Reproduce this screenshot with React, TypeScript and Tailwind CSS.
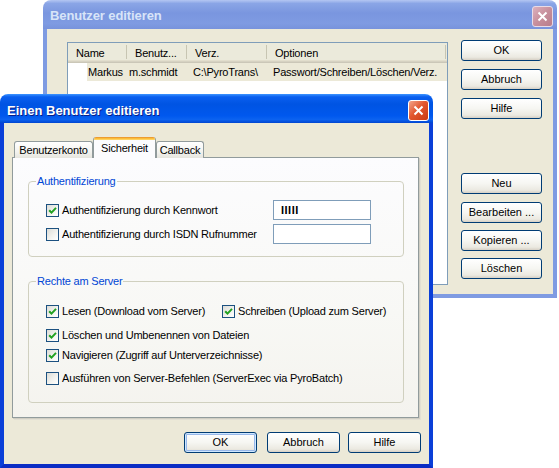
import React from "react";

const XpButton = ({ label, className = "", isDefault = false }: { label: string; className?: string; isDefault?: boolean }) => (
  <div
    className={`flex h-[21px] shrink-0 items-center justify-center rounded-[3px] border border-[#003c74] bg-[linear-gradient(180deg,#ffffff_0%,#f6f6f2_50%,#ebe9e1_85%,#d6d0c5_100%)] text-[11px] leading-none text-black ${
      isDefault ? "shadow-[inset_0_0_0_1px_#cee7ff,inset_0_0_0_2px_#98b8ea]" : ""
    } ${className}`}
  >
    {label}
  </div>
);

const CheckBox = ({ checked }: { checked: boolean }) => (
  <span className="flex h-[13px] w-[13px] shrink-0 items-center justify-center border border-[#1c5180] bg-[linear-gradient(135deg,#dcdcd7_0%,#f4f4f0_60%,#ffffff_100%)]">
    {checked && (
      <svg width="9" height="9" viewBox="0 0 9 9">
        <path d="M1.2 4.2 L3.5 6.6 L8 1.9" stroke="#21a121" strokeWidth="2" fill="none" />
      </svg>
    )}
  </span>
);

const CloseButton = ({ active }: { active: boolean }) => (
  <div
    className={`flex h-[21px] w-[21px] items-center justify-center rounded-[3px] border ${
      active
        ? "border-white bg-[linear-gradient(135deg,#f3a58c_0%,#e2572f_45%,#c93a12_100%)]"
        : "border-[#e8dbe6] bg-[linear-gradient(135deg,#dcb1bd_0%,#c78f9c_50%,#b97d8b_100%)]"
    }`}
  >
    <svg width="11" height="11" viewBox="0 0 11 11">
      <path d="M1.5 1.5 L9.5 9.5 M9.5 1.5 L1.5 9.5" stroke="white" strokeWidth="2" />
    </svg>
  </div>
);

const CheckRow = ({ checked, label, className = "" }: { checked: boolean; label: string; className?: string }) => (
  <div className={`flex h-[13px] items-center gap-[3px] ${className}`}>
    <CheckBox checked={checked} />
    <span className="whitespace-nowrap text-[11px] leading-[13px] tracking-[-0.2px]">{label}</span>
  </div>
);

const Group = ({ title, className = "", children }: { title: string; className?: string; children: React.ReactNode }) => (
  <fieldset className={`w-[376px] rounded-[4px] border border-[#d0d0bf] ${className}`}>
    <legend className="ml-[7px] px-[1px] text-[11px] leading-[13px] tracking-[-0.2px] text-[#0046d5]">{title}</legend>
    {children}
  </fieldset>
);

const COLUMNS = [
  { title: "Name", w: "w-[59px]" },
  { title: "Benutz...", w: "w-[60px]" },
  { title: "Verz.", w: "w-[80px]" },
  { title: "Optionen", w: "w-[179px]" },
];

// hinteres Fenster: Benutzerliste
const UserListWindow = () => (
  <div className="absolute left-[43px] top-0 flex h-[298px] w-[514px] flex-col overflow-hidden rounded-t-[8px]">
    <div className="flex h-[29px] shrink-0 items-center justify-between bg-[linear-gradient(180deg,#b4c6f2_0%,#8aa5e6_12%,#7a96df_45%,#7f9be2_80%,#7893dc_100%)] pl-[7px] pr-[4px] pt-[3px]">
      <span className="text-[13px] font-bold tracking-[-0.1px] text-[#d8e4f8]">Benutzer editieren</span>
      <CloseButton active={false} />
    </div>
    <div className="flex flex-1 border-x-[4px] border-b-[4px] border-[#7f9be2] bg-[#ece9d8]">
      <div className="ml-[20px] mt-[13px] flex h-[243px] w-[381px] flex-col border border-[#7f9db9] bg-white">
        <div className="flex h-[20px] shrink-0 items-center bg-[#ebeadb] shadow-[inset_0_-1px_0_#cbc7b8,inset_0_-2px_0_#d6d2c2,inset_0_-3px_0_#e2decd]">
          {COLUMNS.map((c) => (
            <div key={c.title} className={`flex h-full items-center justify-between pl-[8px] ${c.w}`}>
              <span className="text-[11px] tracking-[-0.2px]">{c.title}</span>
              <span className="mb-[2px] h-[14px] w-px bg-[#c7c5b2]" />
            </div>
          ))}
        </div>
        <div className="flex h-[18px] items-center text-[11px] tracking-[-0.2px]">
          <div className="h-full w-[19px] shrink-0 bg-white" />
          <div className="flex h-full flex-1 items-center bg-[#ece9d8]">
            <span className="w-[40px] pl-[1px]">Markus</span>
            <span className="w-[60px] pl-[2px]">m.schmidt</span>
            <span className="w-[80px] pl-[6px]">C:\PyroTrans\</span>
            <span className="pl-[6px]">Passwort/Schreiben/Löschen/Verz.</span>
          </div>
        </div>
      </div>
      <div className="ml-[13px] mt-[11px] flex w-[81px] flex-col">
        <XpButton label="OK" />
        <XpButton label="Abbruch" className="mt-[8px]" />
        <XpButton label="Hilfe" className="mt-[8px]" />
        <XpButton label="Neu" className="mt-[54px]" />
        <XpButton label="Bearbeiten ..." className="mt-[8px]" />
        <XpButton label="Kopieren ..." className="mt-[7px]" />
        <XpButton label="Löschen" className="mt-[7px]" />
      </div>
    </div>
  </div>
);

// vorderes Fenster: Einen Benutzer editieren
const EditUserDialog = () => (
  <div className="absolute left-0 top-[94px] flex h-[374px] w-[433px] flex-col overflow-hidden rounded-t-[8px]">
    <div className="flex h-[29px] shrink-0 items-center justify-between bg-[linear-gradient(180deg,#3d95ff_0%,#0a5fef_10%,#0054e3_35%,#0058ee_75%,#0b62f0_88%,#0045d0_100%)] pl-[7px] pr-[4px] pt-[4px]">
      <span className="text-[13px] font-bold text-white [text-shadow:1px_1px_0_#0a1f87]">Einen Benutzer editieren</span>
      <CloseButton active />
    </div>
    <div className="flex flex-1 flex-col border-x-[4px] border-b-[4px] border-x-[#0a3fd8] border-b-[#0a2cc4] bg-[#ece9d8] pt-[14px]">
      {/* Tabs */}
      <div className="relative z-10 -mb-px ml-[10px] flex items-end text-[11px] tracking-[-0.2px]">
        <div className="flex h-[17px] w-[79px] items-center justify-center rounded-t-[3px] border-x border-t border-[#919b9c] bg-[linear-gradient(180deg,#ffffff_0%,#f3f3ef_60%,#e6e5de_100%)]">
          Benutzerkonto
        </div>
        <div className="flex h-[21px] w-[63px] flex-col overflow-hidden rounded-t-[3px] border-x border-[#919b9c] bg-[#fcfcfe]">
          <div className="h-[3px] shrink-0 bg-[linear-gradient(180deg,#e68b2c_0%,#ffc73c_60%,#ffd97a_100%)]" />
          <div className="flex flex-1 items-center justify-center pb-[3px]">Sicherheit</div>
        </div>
        <div className="flex h-[17px] w-[48px] items-center justify-center rounded-t-[3px] border-x border-t border-[#919b9c] bg-[linear-gradient(180deg,#ffffff_0%,#f3f3ef_60%,#e6e5de_100%)]">
          Callback
        </div>
      </div>

      {/* Register Sicherheit */}
      <div className="ml-[8px] flex h-[261px] w-[407px] flex-col border border-[#919b9c] bg-[linear-gradient(180deg,#fcfcfe_0%,#f8f8f5_60%,#f4f3ee_100%)] px-[15px] pt-[17px] shadow-[1px_1px_0_#d0cec3,2px_2px_0_#e2dfd3]">
        <Group title="Authentifizierung" className="h-[82px]">
          <div className="mt-[12px] flex h-[20px] items-center pl-[17px]">
            <CheckBox checked />
            <span className="ml-[3px] w-[211px] whitespace-nowrap text-[11px] tracking-[-0.2px]">Authentifizierung durch Kennwort</span>
            <div className="flex h-[20px] w-[98px] items-center border border-[#7f9db9] bg-white pl-[7px] text-[11px] font-bold tracking-[0.5px]">
              IIIII
            </div>
          </div>
          <div className="mt-[4px] flex h-[20px] items-center pl-[17px]">
            <CheckBox checked={false} />
            <span className="ml-[3px] w-[211px] whitespace-nowrap text-[11px] tracking-[-0.2px]">Authentifizierung durch ISDN Rufnummer</span>
            <div className="h-[20px] w-[98px] border border-[#7f9db9] bg-white" />
          </div>
        </Group>

        <Group title="Rechte am Server" className="mt-[18px] h-[128px]">
          <div className="pl-[17px]">
            <div className="mt-[16px] flex items-center">
              <CheckRow checked label="Lesen (Download vom Server)" className="w-[176px]" />
              <CheckRow checked label="Schreiben (Upload zum Server)" className="mt-[1px]" />
            </div>
            <CheckRow checked label="Löschen und Umbenennen von Dateien" className="mt-[11px]" />
            <CheckRow checked label="Navigieren (Zugriff auf Unterverzeichnisse)" className="mt-[7px]" />
            <CheckRow checked={false} label="Ausführen von Server-Befehlen (ServerExec via PyroBatch)" className="mt-[10px]" />
          </div>
        </Group>
      </div>

      <div className="mt-[14px] flex justify-end pr-[8px]">
        <XpButton label="OK" isDefault className="w-[73px]" />
        <XpButton label="Abbruch" className="ml-[10px] w-[73px]" />
        <XpButton label="Hilfe" className="ml-[8px] w-[73px]" />
      </div>
    </div>
  </div>
);

export default function App() {
  return (
    <div className="relative h-[468px] w-[559px] overflow-hidden bg-white font-['Liberation_Sans',Arial,sans-serif] text-black">
      <UserListWindow />
      <EditUserDialog />
    </div>
  );
}
